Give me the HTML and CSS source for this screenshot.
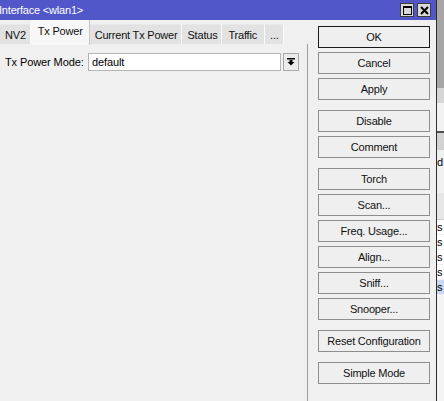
FILE: index.html
```html
<!DOCTYPE html>
<html>
<head>
<meta charset="utf-8">
<link rel="stylesheet" href="styles.css">
</head>
<body>
<div class="screen">
  <div class="dialog">
    <div class="titlebar">
      <span class="title">Interface &lt;wlan1&gt;</span>
      <div class="tb-buttons">
        <span class="tb-btn"><svg width="9" height="9" viewBox="0 0 9 9"><rect x="0.5" y="0.5" width="8" height="8" fill="none" stroke="#000" stroke-width="1"/><rect x="0" y="0" width="9" height="2" fill="#000"/></svg></span>
        <span class="tb-btn"><svg width="9" height="9" viewBox="0 0 9 9"><path d="M1 1 L8 8 M8 1 L1 8" stroke="#000" stroke-width="2"/></svg></span>
      </div>
    </div>
    <div class="dialog-body">
      <div class="main">
        <div class="tabs">
          <div class="tab">NV2</div>
          <div class="tab active">Tx Power</div>
          <div class="tab">Current Tx Power</div>
          <div class="tab">Status</div>
          <div class="tab wide">Traffic</div>
          <div class="tab">...</div>
        </div>
        <div class="panel">
          <div class="field">
            <span class="label">Tx Power Mode:</span>
            <div class="select">default</div>
            <span class="drop"><svg width="8" height="8" viewBox="0 0 8 8"><rect x="0" y="0" width="8" height="1.5" fill="#000"/><rect x="2.5" y="2" width="3" height="2" fill="#000"/><path d="M0.5 4 L7.5 4 L4 7.5 Z" fill="#000"/></svg></span>
          </div>
        </div>
      </div>
      <div class="actions">
        <div class="group">
          <div class="btn default">OK</div>
          <div class="btn">Cancel</div>
          <div class="btn">Apply</div>
        </div>
        <div class="group">
          <div class="btn">Disable</div>
          <div class="btn">Comment</div>
        </div>
        <div class="group">
          <div class="btn">Torch</div>
          <div class="btn">Scan...</div>
          <div class="btn">Freq. Usage...</div>
          <div class="btn">Align...</div>
          <div class="btn">Sniff...</div>
          <div class="btn">Snooper...</div>
        </div>
        <div class="group">
          <div class="btn">Reset Configuration</div>
        </div>
        <div class="group">
          <div class="btn">Simple Mode</div>
        </div>
      </div>
    </div>
  </div>
  <div class="backdrop">
    <div class="bd-top"></div>
    <div class="bd-band"></div>
    <div class="bd-light"></div>
    <div class="bd-line"></div>
    <div class="bd-gray"></div>
    <div class="bd-text"><span class="clip">d</span></div>
    <div class="bd-header"></div>
    <div class="bd-rows">
      <div class="bd-row"><span class="clip">s</span></div>
      <div class="bd-row"><span class="clip">s</span></div>
      <div class="bd-row"><span class="clip">s</span></div>
      <div class="bd-row"><span class="clip">s</span></div>
      <div class="bd-row selected"><span class="clip">s</span></div>
    </div>
    <div class="bd-rest"></div>
  </div>
</div>
</body>
</html>
```
FILE: styles.css
```css
* { box-sizing: border-box; }
html, body { margin: 0; padding: 0; }
body {
  font-family: "Liberation Sans", Arial, sans-serif;
  font-size: 11px;
  color: #000;
  background: #f0f0f0;
}
.screen {
  display: flex;
  width: 444px;
  height: 401px;
  overflow: hidden;
}
.dialog {
  width: 437px;
  flex: none;
  display: flex;
  flex-direction: column;
  background: #f0f0f0;
  border-right: 1px solid #2e2e2e;
}
.titlebar {
  height: 20px;
  flex: none;
  background: #5157c9;
  display: flex;
  align-items: center;
  justify-content: space-between;
  padding: 0 5px 0 0;
}
.title {
  color: #fff;
  font-size: 11px;
  letter-spacing: -0.2px;
  margin-left: -1px;
}
.tb-buttons {
  display: flex;
  gap: 3px;
  align-items: center;
}
.tb-btn {
  width: 14px;
  height: 14px;
  background: #d9d9d9;
  border: 1px solid #3c3c3c;
  display: flex;
  align-items: center;
  justify-content: center;
}
.tb-btn svg { display: block; }
.dialog-body {
  flex: 1;
  display: flex;
}
.main {
  width: 308px;
  flex: none;
  display: flex;
  flex-direction: column;
}
.tabs {
  height: 24px;
  display: flex;
  align-items: flex-end;
}
.tab {
  height: 20px;
  padding: 0 4px 0 5px;
  background: #e2e2e2;
  border-right: 1px solid #fbfbfb;
  border-top: 1px solid #e8e8e8;
  display: flex;
  align-items: center;
  letter-spacing: -0.2px;
  color: #111;
}
.tab.wide {
  padding: 0 7px 0 6px;
}
.tab.active {
  height: 25px;
  margin-bottom: -1px;
  padding: 0 6px 3px 7px;
  background: #f7f7f7;
  border-top: none;
  border-right: 1px solid #c4c4c4;
  position: relative;
  z-index: 1;
}
.panel {
  flex: 1;
  border-right: 1px solid #9e9e9e;
  padding: 9px 0 0 5px;
}
.field {
  display: flex;
  align-items: center;
  height: 18px;
}
.label {
  width: 83px;
  letter-spacing: -0.1px;
}
.select {
  width: 193px;
  height: 18px;
  background: #fff;
  border: 1px solid #b5b5b5;
  padding-left: 3px;
  display: flex;
  align-items: center;
  letter-spacing: -0.1px;
}
.drop {
  margin-left: 2px;
  width: 16px;
  height: 18px;
  border: 1px solid #a7a7a7;
  background: #ececec;
  display: flex;
  align-items: center;
  justify-content: center;
}
.drop svg { display: block; }
.actions {
  margin-left: 10px;
  padding-top: 6px;
  width: 112px;
  display: flex;
  flex-direction: column;
  gap: 10px;
}
.group {
  display: flex;
  flex-direction: column;
  gap: 4px;
}
.btn {
  height: 22px;
  border: 1px solid #8e8e8e;
  background: #efefef;
  display: flex;
  align-items: center;
  justify-content: center;
  letter-spacing: -0.2px;
  color: #111;
}
.btn.default {
  border: 1px solid #1a1a1a;
}
.backdrop {
  flex: 1;
  display: flex;
  flex-direction: column;
  overflow: hidden;
  background: #f0f0f0;
}
.bd-top { height: 88px; background: #a6a6a6; flex: none; }
.bd-band { height: 15px; background: #d6d6d6; flex: none; }
.bd-light { height: 28px; background: #f2f2f2; flex: none; }
.bd-line { height: 2px; background: #505050; flex: none; }
.bd-gray { height: 17px; background: #d2d2d2; flex: none; }
.bd-text { height: 43px; background: #f0f0f0; padding-top: 6px; flex: none; }
.bd-header { height: 27px; background: #e6e6e6; border-bottom: 1px solid #cfcfcf; flex: none; }
.bd-rows { background: #fff; flex: none; }
.bd-row { height: 15px; display: flex; align-items: center; border-bottom: 1px solid #f0f0f0; }
.bd-row.selected { background: #c7daf2; }
.bd-rest { flex: 1; background: #f4f4f4; }
.clip { display: block; font-size: 11px; line-height: 12px; }
```
